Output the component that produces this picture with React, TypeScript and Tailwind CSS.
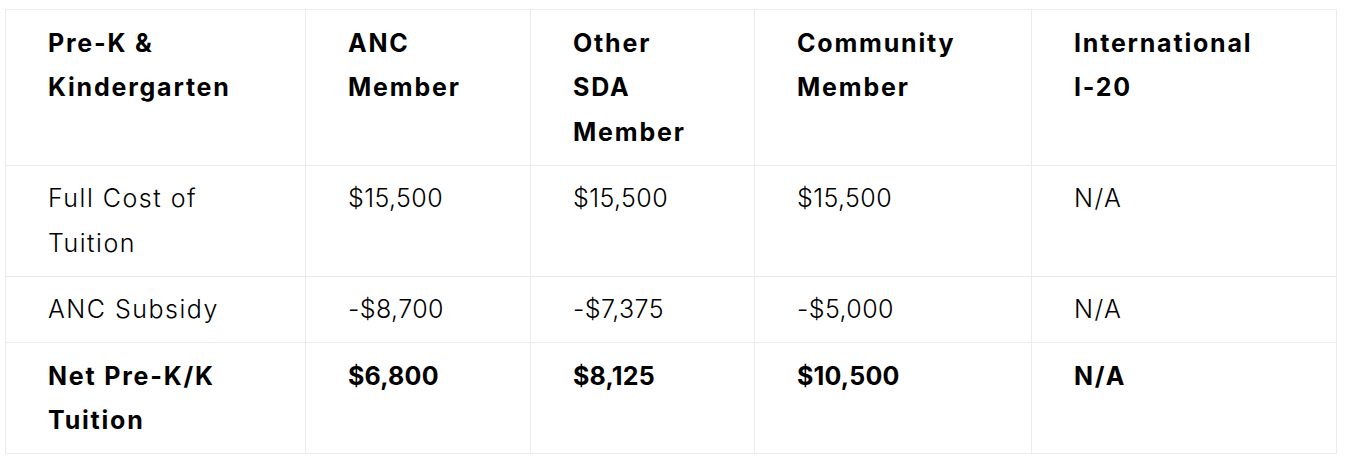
const header = [
  ["Pre-K &", "Kindergarten"],
  ["ANC", "Member"],
  ["Other", "SDA", "Member"],
  ["Community", "Member"],
  ["International", "I-20"],
];

const rows: { cells: string[][]; bold?: boolean }[] = [
  { cells: [["Full Cost of", "Tuition"], ["$15,500"], ["$15,500"], ["$15,500"], ["N/A"]] },
  { cells: [["ANC Subsidy"], ["-$8,700"], ["-$7,375"], ["-$5,000"], ["N/A"]] },
  {
    cells: [["Net Pre-K/K", "Tuition"], ["$6,800"], ["$8,125"], ["$10,500"], ["N/A"]],
    bold: true,
  },
];

const widths = ["w-[300px]", "w-[225px]", "w-[224px]", "w-[277px]", "w-[305px]"];

// figures in the reference font run narrower than the letters
const isFigure = (s: string) => /^[-$0-9,]+$/.test(s);

function Lines({ lines, bold }: { lines: string[]; bold?: boolean }) {
  return (
    <>
      {lines.map((l, i) => {
        const track = isFigure(l)
          ? bold
            ? "tracking-[0.2px]"
            : "tracking-[0.4px]"
          : bold
            ? "tracking-[1.8px]"
            : "tracking-[1.5px]";
        return (
          <span key={i} className={`block whitespace-nowrap ${track}`}>
            {l}
          </span>
        );
      })}
    </>
  );
}

export default function App() {
  return (
    <div className="w-[1347px] h-[466px] bg-white pt-[9px] pl-[5px] font-['Inter',sans-serif] text-black">
      <table className="w-[1331px] table-fixed border-collapse text-[25px] leading-[44.5px]">
        <thead>
          <tr>
            {header.map((h, i) => (
              <th
                key={i}
                className={`${widths[i]} border border-[#ebebeb] pl-[42px] pr-[20px] py-[10.5px] text-left align-top font-bold`}
              >
                <Lines lines={h} bold />
              </th>
            ))}
          </tr>
        </thead>
        <tbody>
          {rows.map((r, ri) => (
            <tr key={ri}>
              {r.cells.map((c, ci) => (
                <td
                  key={ci}
                  className={`border border-[#ebebeb] pl-[42px] pr-[20px] py-[10.5px] align-top ${
                    r.bold ? "font-bold" : "font-light"
                  }`}
                >
                  <Lines lines={c} bold={r.bold} />
                </td>
              ))}
            </tr>
          ))}
        </tbody>
      </table>
    </div>
  );
}
